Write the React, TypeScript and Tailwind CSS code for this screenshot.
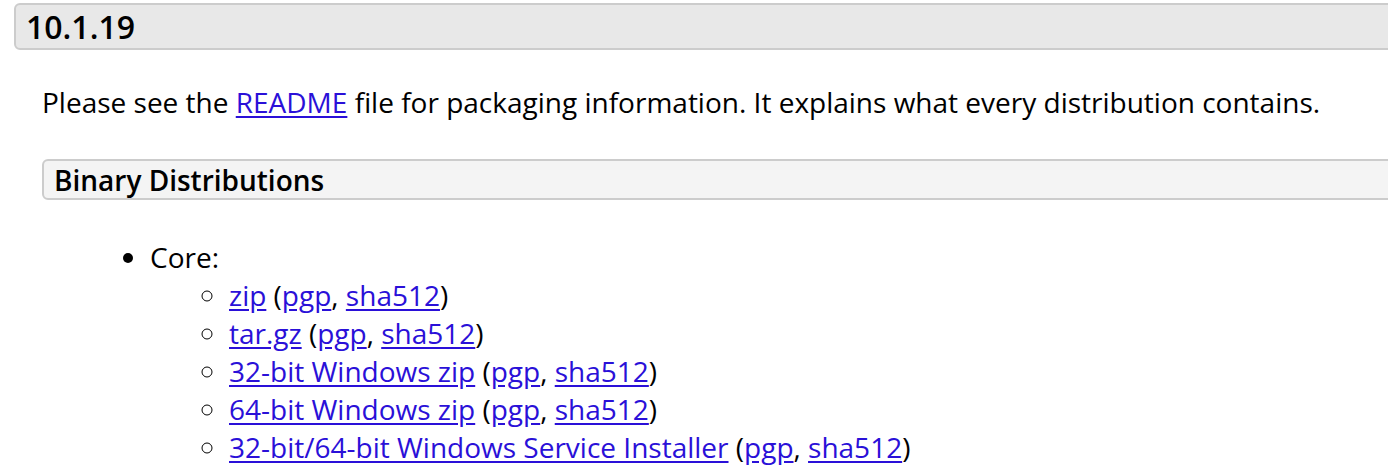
import React from "react";

type Item = { label: string };

const items: Item[] = [
  { label: "zip" },
  { label: "tar.gz" },
  { label: "32-bit Windows zip" },
  { label: "64-bit Windows zip" },
  { label: "32-bit/64-bit Windows Service Installer" },
];

const Link: React.FC<{ children: React.ReactNode }> = ({ children }) => (
  <a href="#" className="text-[#2a10d8] underline underline-offset-[3px]">
    {children}
  </a>
);

const App: React.FC = () => {
  return (
    <div className="w-[1388px] h-[471px] overflow-hidden bg-white text-black font-['Open_Sans',sans-serif] pt-[3px]">
      {/* version header */}
      <div className="ml-[14px] -mr-[20px] h-[47px] rounded-[6px] border-2 border-[#cccccc] bg-[#e8e8e8] pl-[10px] flex items-center">
        <h2 className="text-[32px] font-semibold leading-none">10.1.19</h2>
      </div>

      <div className="pl-[42px]">
        <p className="mt-[37px] text-[28px] leading-[30px]">
          Please see the <Link>README</Link> file for packaging information. It explains what every distribution contains.
        </p>

        {/* sub header */}
        <div className="mt-[42px] -mr-[20px] h-[41px] rounded-[6px] border-2 border-[#cccccc] bg-[#f4f4f4] pl-[10px] flex items-center">
          <h3 className="text-[28px] font-semibold leading-none">Binary Distributions</h3>
        </div>

        <ul className="mt-[38px] pl-[108px] text-[28px] leading-[38px] list-disc">
          <li>
            Core:
            <ul className="pl-[79px] list-[circle]">
              {items.map((it) => (
                <li key={it.label}>
                  <Link>{it.label}</Link> (<Link>pgp</Link>, <Link>sha512</Link>)
                </li>
              ))}
            </ul>
          </li>
        </ul>
      </div>
    </div>
  );
};

export default App;
